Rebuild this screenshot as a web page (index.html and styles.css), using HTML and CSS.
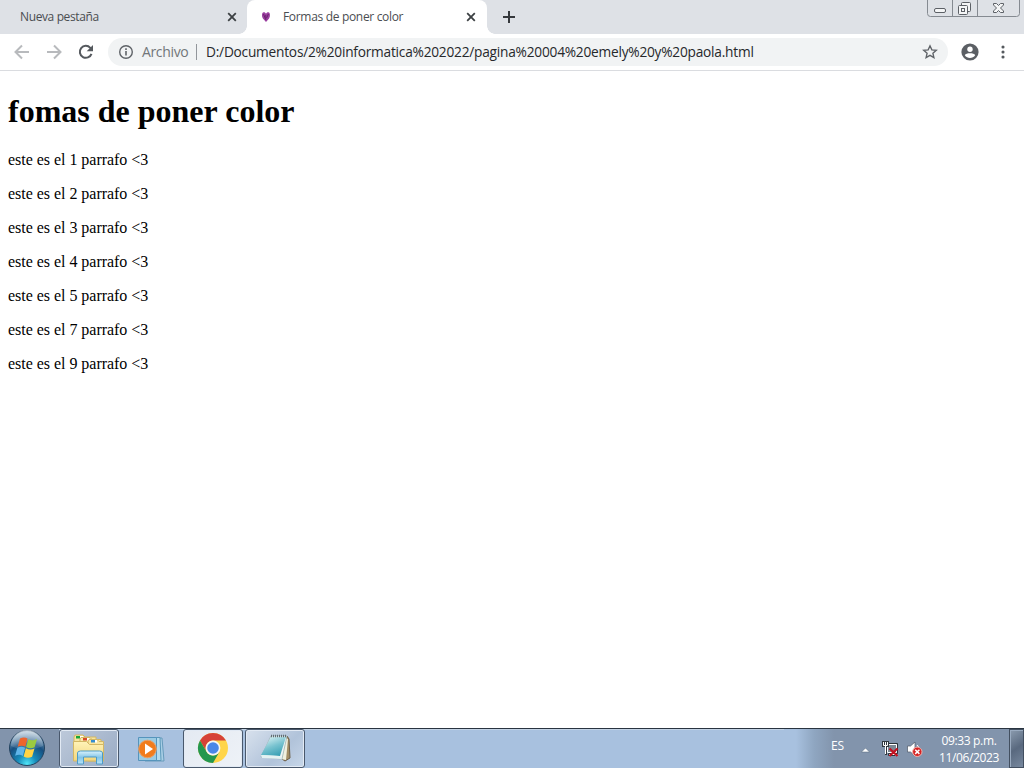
FILE: index.html
```html
<!DOCTYPE html>
<html lang="es">
<head>
<meta charset="utf-8">
<title>Formas de poner color</title>
<link rel="stylesheet" href="styles.css">
</head>
<body>
<header class="tabstrip">
  <div class="tab">
    <span class="tab-title title-new">Nueva pestaña</span>
    <svg class="close" width="10" height="10" viewBox="0 0 10 10"><path d="M1.2 1.2l7.6 7.6M8.8 1.2L1.2 8.8"/></svg>
  </div>
  <div class="tab active">
    <svg class="favicon" width="10" height="12" viewBox="0 0 10 12"><path d="M5 11L1.900 7.500C.6 5.500.7 1.300 2.600 1.300c1.400 0 2 .6 2.400 1.500.4-.9 1-1.500 2.400-1.500 1.900 0 2 4.200.7 6.200z" fill="#9b3fa0"/><path d="M2.500 3l2 5M7.400 3L5.600 7M4.800 4v5" stroke="#6c2370" fill="none"/></svg>
    <span class="tab-title title-active">Formas de poner color</span>
    <svg class="close" width="10" height="10" viewBox="0 0 10 10"><path d="M1.2 1.2l7.6 7.6M8.8 1.2L1.2 8.8"/></svg>
  </div>
  <svg class="plus" width="12" height="12" viewBox="0 0 12 12"><path d="M6 0v12M0 6h12"/></svg>
  <svg class="window-controls" width="94" height="18" viewBox="0 0 94 18">
    <path d="M.5 0v13.5a3 3 0 0 0 3 3h86a3 3 0 0 0 3-3V0M25.500 0v16.500M50.500 0v16.500" fill="none" stroke="#858a91"/>
    <g fill="#f4f5f6" stroke="#5c6066">
      <rect x="7.500" y="8.500" width="11" height="4" rx="1.500"/>
      <rect x="34.500" y="2.500" width="9" height="9" rx="1"/>
      <rect x="31.500" y="5.500" width="9" height="9" rx="1"/>
      <rect x="34.500" y="8.500" width="3" height="3"/>
      <path d="M66.500 3.500h3l2 2 2-2h3v1.500l-3 3 3 3v1.500h-3l-2-2-2 2h-3V11l3-3-3-3z"/>
    </g>
  </svg>
</header>

<nav class="toolbar">
  <svg class="back" width="16" height="16" viewBox="0 0 16 16"><path d="M15 8H2M8 1.500L1.500 8 8 14.500"/></svg>
  <svg class="forward" width="16" height="16" viewBox="0 0 16 16"><path d="M1 8h13M8 1.500L14.500 8 8 14.500"/></svg>
  <svg class="reload" width="16" height="16" viewBox="0 0 16 16"><path d="M13.500 9.800A6 6 0 1 1 12.300 3.800L14 5.500" fill="none" stroke="#55595e" stroke-width="2"/><path d="M15 1v6.300H8.700z" fill="#55595e"/></svg>
  <div class="address">
    <svg class="info" width="16" height="16" viewBox="0 0 16 16"><circle cx="8" cy="8" r="6.300" fill="none" stroke="#5f6368" stroke-width="1.400"/><path d="M8 7v4.500M8 4.300v1.600" stroke="#5f6368" stroke-width="1.600"/></svg>
    <span class="scheme">Archivo</span>
    <span class="divider"></span>
    <span class="url">D:/Documentos/2%20informatica%202022/pagina%20004%20emely%20y%20paola.html</span>
    <svg class="star" width="16" height="16" viewBox="0 0 16 16"><path d="M8 1.800l1.850 4.100 4.450.4-3.400 2.950 1 4.400L8 11.300l-3.900 2.350 1-4.400L1.700 6.300l4.450-.4z" fill="none" stroke="#5f6368" stroke-width="1.350"/></svg>
  </div>
  <svg class="profile" width="18" height="18" viewBox="0 0 18 18"><circle cx="9" cy="9" r="8.600" fill="#5b5f64"/><circle cx="9" cy="6.200" r="2.700" fill="#fff"/><path d="M3.800 12.300c1.200-2.600 9.200-2.600 10.400 0-2.400 3.500-8 3.500-10.400 0z" fill="#fff"/></svg>
  <svg class="menu" width="4" height="14" viewBox="0 0 4 14" fill="#55595e"><circle cx="2" cy="2" r="1.550"/><circle cx="2" cy="7" r="1.550"/><circle cx="2" cy="12" r="1.550"/></svg>
</nav>

<main class="page">
  <h1>fomas de poner color</h1>
  <p>este es el 1 parrafo &lt;3</p>
  <p>este es el 2 parrafo &lt;3</p>
  <p>este es el 3 parrafo &lt;3</p>
  <p>este es el 4 parrafo &lt;3</p>
  <p>este es el 5 parrafo &lt;3</p>
  <p>este es el 7 parrafo &lt;3</p>
  <p>este es el 9 parrafo &lt;3</p>
</main>

<footer class="taskbar">
  <div class="start">
    <svg width="38" height="38" viewBox="0 0 38 38">
      <defs>
        <radialGradient id="orb" cx=".5" cy=".95" r=".9"><stop offset="0" stop-color="#50e5f7"/><stop offset=".3" stop-color="#168bba"/><stop offset=".65" stop-color="#174f80"/><stop offset="1" stop-color="#8aa9c2"/></radialGradient>
        <linearGradient id="shine" x2="0" y2="1"><stop offset="0" stop-color="#fff" stop-opacity=".6"/><stop offset="1" stop-color="#fff" stop-opacity=".08"/></linearGradient>
      </defs>
      <circle cx="19" cy="19" r="17.500" fill="url(#orb)" stroke="#23435f"/>
      <path d="M3 17a16 16 0 0 1 32 0c-8 4-23 5-32 0z" fill="url(#shine)"/>
      <path d="M12 9.500c3-1.600 5.500-1.200 7.500.1l-2.200 8.200c-2.300-1.500-4.900-1.300-7.600-.1z" fill="#ed652c"/>
      <path d="M20.300 10.200c2.800 1.500 5.400 1.500 8.700-.3l-2.400 8.400c-3 1.500-5.700 1.300-8.500-.3z" fill="#9bcb40"/>
      <path d="M9.400 18.700c2.700-1.300 5.400-1.100 7.700.1l-2.300 8.100c-2.300-1.500-4.900-1.400-7.700-.1z" fill="#60b5e9"/>
      <path d="M17.900 19.300c2.900 1.500 5.500 1.600 8.600.2l-2.400 8.300c-2.900 1.500-5.700 1.400-8.500-.2z" fill="#ffd445"/>
    </svg>
  </div>
  <div class="task explorer">
    <svg width="34" height="32" viewBox="0 0 34 32">
      <defs><linearGradient id="folder" x2="0" y2="1"><stop offset="0" stop-color="#fff3b8"/><stop offset="1" stop-color="#f2d67d"/></linearGradient><linearGradient id="stand" x2="0" y2="1"><stop offset="0" stop-color="#d9f2fc"/><stop offset=".5" stop-color="#83c5e8"/><stop offset="1" stop-color="#b9e4f8"/></linearGradient></defs>
      <path d="M2 4l1-2h8l2 2h11v23H2z" fill="#f7e5a0" stroke="#d2b765"/>
      <path d="M4 3h4v2.500H4z" fill="#18a637"/><path d="M8 3h3v2.500H8z" fill="#fff"/>
      <path d="M8 6l1-1.500h9l2 2h9V27H8z" fill="#faeaab" stroke="#d2b765"/><path d="M11 5h4v2.500h-4z" fill="#d94b29"/><path d="M15 5h2v2.500h-2z" fill="#fff"/>
      <path d="M16 8l1-1.500h8l2 2h4.500V28H16z" fill="#f9e79f" stroke="#d2b765"/><path d="M19 7h4v2.500h-4z" fill="#338dd0"/><path d="M23 7h2v2.500h-2z" fill="#fff"/>
      <path d="M1.500 8.500h13l3 3h14V28h-30z" fill="url(#folder)" stroke="#d2b765"/>
      <path d="M5.500 31V20q0-2 3-2h19q3 0 3 2v11h-6v-7h-13v7z" fill="url(#stand)" stroke="#4c9bc7"/>
    </svg>
  </div>
  <div class="media">
    <svg width="30" height="28" viewBox="0 0 30 28">
      <path d="M8 3h17l2 23H8z" fill="#a9cfe6" stroke="#679bbb"/><path d="M5 2.500h18l1 23H5z" fill="#b4dbed" stroke="#5c98ba"/><path d="M1.500 2.500h18v23h-18z" fill="#9bcbe2" stroke="#5594bc"/>
      <circle cx="10.500" cy="14" r="8.800" fill="#f17c1c" stroke="#e8a168"/><path d="M8 8.500l8 5.500-8 5.500z" fill="#fff"/>
    </svg>
  </div>
  <div class="task chrome">
    <svg width="32" height="32" viewBox="0 0 32 32">
      <circle cx="16" cy="16" r="15" fill="#ffd54a"/>
      <path d="M3 8.500A15 15 0 0 1 29 8.500H16a7.500 7.500 0 0 0-6.500 11.200z" fill="#d64238"/>
      <path d="M3 8.500l6.500 11.200A7.500 7.500 0 0 0 22.500 19.700L16 31A15 15 0 0 1 3 8.500z" fill="#23974f"/>
      <circle cx="16" cy="16" r="7.400" fill="#f6f7f6"/><circle cx="16" cy="16" r="5.800" fill="#4a87e8"/>
    </svg>
  </div>
  <div class="task notes">
    <svg width="32" height="30" viewBox="0 0 32 30">
      <defs><linearGradient id="note" x1=".2" x2=".7" y2="1"><stop offset="0" stop-color="#d9f1f3"/><stop offset=".5" stop-color="#79c3d0"/><stop offset="1" stop-color="#369fb3"/></linearGradient></defs>
      <path d="M28 3l2 3 1 19-5 3-3-2z" fill="#a38e66" stroke="#6b5e48"/><path d="M25 4l4 2-2 21-5-1z" fill="#f0f0df"/><path d="M12 3h16l-5 23-21-2z" fill="#eef5f4" stroke="#91a9ad" stroke-width=".7"/><path d="M12 4h15l-6 19-19-1z" fill="url(#note)"/><path d="M2 22l19 1 2 3-20-1z" fill="#e4f2f2"/><path d="M12 3h16" stroke="#626d72" stroke-width="2.500" stroke-dasharray="1 1"/>
    </svg>
  </div>
  <div class="tray">
    <span class="lang">ES</span>
    <svg class="arrow" width="9" height="6" viewBox="0 0 9 6"><path d="M.5 5l4-4 4 4z" fill="#fff" stroke="#53657b" stroke-width=".5"/></svg>
    <svg class="network" width="17" height="17" viewBox="0 0 17 17"><path d="M5.500 3.500h9v8h-9z" fill="#7c8794" stroke="#fff"/><path d="M7 2.500h8.500v10H6.500v2H13" fill="none" stroke="#2c3339"/><path d="M7 13.500h6" stroke="#fff"/><path d="M0 0h7v6H5v8H3V6H0z" fill="#30373e"/><path d="M1.500 1v3.500h4V1M3.500 1v12" fill="none" stroke="#fff"/><path d="M7.500 7.500l8 7.500M15.500 7.500l-8 7.500" stroke="#c31220" stroke-width="2.300"/></svg>
    <svg class="volume" width="17" height="17" viewBox="0 0 17 17"><path d="M1.500 5h3L9 1v14l-4.500-4h-3z" fill="#fff" stroke="#4e5865" stroke-width=".7"/><path d="M11 4q2 1.500 1.500 4" fill="none" stroke="#fff"/><circle cx="11.300" cy="10.800" r="4.700" fill="#d52222" stroke="#f2b2ad"/><path d="M9.200 8.700l4.200 4.200M13.400 8.700l-4.200 4.200" stroke="#fff" stroke-width="1.500"/></svg>
    <div class="clock"><span class="time">09:33 p.m.</span><span class="date">11/06/2023</span></div>
    <div class="desktop"></div>
  </div>
</footer>
</body>
</html>
```
FILE: styles.css
```css
* { box-sizing: border-box; }
body {
  margin: 0; width: 1024px; height: 768px; overflow: hidden;
  display: flex; flex-direction: column; background: #fff;
  font-family: "Open Sans", "Noto Sans", sans-serif;
}
svg { display: block; flex: none; }
span { white-space: nowrap; }
.tabstrip { flex: none; height: 34px; display: flex; background: #dee1e6; }
.tab { width: 247px; height: 34px; display: flex; align-items: center; padding: 0 10px 0 20px; }
.tab.active { position: relative; width: 240px; background: #fff; border-radius: 8px 8px 0 0; padding: 0 11px 0 14px; }
.active::before, .active::after { content: ""; position: absolute; bottom: 0; width: 8px; height: 8px; }
.active::before { left: -8px; background: radial-gradient(circle at 0 0, #dee1e6 7.5px, #fff 8px); }
.active::after { right: -8px; background: radial-gradient(circle at 100% 0, #dee1e6 7.5px, #fff 8px); }
.tab-title { font-size: 12px; line-height: 16px; color: #4a4d51; }
.title-new { letter-spacing: -0.38px; }
.title-active { margin-left: 12px; letter-spacing: -0.32px; }
.close { margin-left: auto; }
.close path { stroke: #3c4043; stroke-width: 1.8; fill: none; }
.plus { margin: 11px 0 0 16px; }
.plus path { stroke: #35383c; stroke-width: 2; }
.window-controls { margin-left: auto; margin-right: 3px; }
.toolbar { flex: none; height: 37px; display: flex; align-items: center; padding: 0 19px 0 14px; border-bottom: 1px solid #dadce0; }
.back path, .forward path { fill: none; stroke: #b8babd; stroke-width: 2; }
.forward { margin-left: 16px; }
.reload { margin-left: 16px; }
.address { width: 840px; height: 28px; border-radius: 14px; background: #f1f3f4; margin-left: 14px; display: flex; align-items: center; padding: 0 10px; }
.scheme, .url { font-size: 14px; line-height: 20px; }
.scheme { width: 48px; margin-left: 8px; color: #72767a; letter-spacing: -0.35px; }
.divider { width: 1px; height: 16px; margin: 0 9px 0 6px; background: #92969b; }
.url { color: #26282b; font-size: 13.7px; letter-spacing: -0.22px; }
.star { margin-left: auto; }
.profile { margin-left: 13px; }
.menu { margin-left: auto; }
.page { flex: 1; padding: 1px 8px 0; font: 16px/18px "Liberation Serif", "Times New Roman", serif; color: #000; overflow: hidden; }
.page h1 { margin: 21px 0; font-size: 32px; line-height: 37px; }
.page p { margin: 16px 0; letter-spacing: -0.03px; }
.taskbar { flex: none; height: 40px; display: flex; border-top: 1px solid #293440; background: #a8c1df; box-shadow: inset 0 1px #c3d3e5; }
.start { width: 59px; padding-left: 8px; background: #8294ac; }
.task { width: 60px; height: 39px; display: flex; align-items: center; justify-content: center; border: 1px solid #49586c; border-radius: 3px; box-shadow: inset 0 0 0 1px #e2eaf4; background: linear-gradient(135deg, #d8e1ed, #b1c3da 60%, #c7d7e9); }
.explorer { background: linear-gradient(135deg, #bdc9da, #99abc4); }
.media { width: 64px; padding: 6px 0 0 18px; }
.chrome { background: linear-gradient(135deg, #e4eaf2, #eef2f7); }
.chrome svg, .notes svg { margin-bottom: 2px; }
.notes { margin-left: 2px; }
.tray { margin-left: auto; width: 240px; display: flex; background: linear-gradient(90deg, #a8c1df 12px, #8fa6c1 30px, #8294ac 50px); color: #fff; font-size: 12px; }
.lang { width: 15px; margin: 8px 0 0 47px; line-height: 17px; letter-spacing: -0.1px; }
.arrow { margin: 18px 0 0 15px; }
.network { margin: 12px 0 0 12px; }
.volume { margin: 12px 0 0 7px; }
.clock { width: 62px; margin: 3px 0 0 15px; display: flex; flex-direction: column; align-items: center; line-height: 17px; letter-spacing: -0.35px; }
.desktop { width: 15px; margin-left: auto; border: 1px solid #424f60; box-shadow: inset 1px 1px #9aabc0; background: linear-gradient(145deg, #8c9caf, #59697f 50%, #77889e); }
```
